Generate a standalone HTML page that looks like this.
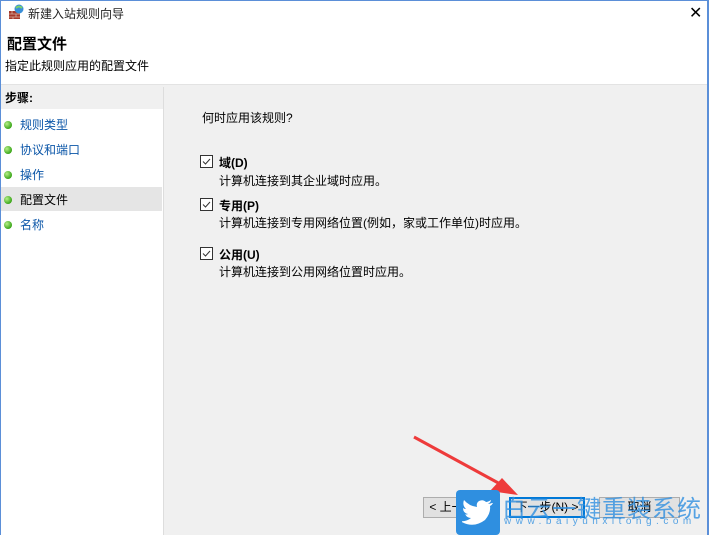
<!DOCTYPE html>
<html><head><meta charset="utf-8"><style>
body{margin:0;width:709px;height:535px;overflow:hidden;font-family:"Liberation Sans","Noto Sans CJK SC",sans-serif;font-size:12px;color:#000;position:relative;background:#f0f0f0}
.a{position:absolute;white-space:nowrap}
.cb{position:absolute;width:11px;height:11px;border:1px solid #333;background:#fff}
.cb svg{position:absolute;left:0;top:0}
.dot{position:absolute;left:4px;width:8px;height:8px;border-radius:50%;background:radial-gradient(circle at 35% 35%,#b8f08a,#3aa619 70%)}
.btn{position:absolute;top:497px;height:19px;border:1px solid #adadad;background:#e1e1e1;text-align:center;line-height:19px}
</style></head><body>
<div class="a" style="left:0;top:0;width:709px;height:84px;background:#fff;border-bottom:1px solid #e3e3e3"></div>
<div class="a" style="left:0;top:0;width:1px;height:535px;background:#5b8fd8"></div>
<div class="a" style="left:707px;top:0;width:2px;height:535px;background:#5b8fd8"></div>
<div class="a" style="left:0;top:0;width:709px;height:1px;background:#5b8fd8"></div>
<div class="a" style="left:8px;top:4px;width:16px;height:16px"><svg width="16" height="16"><rect x="1" y="7" width="11" height="8" fill="#a5382a"/><path d="M1 10h11M1 13h11M4 7v3M8 10v3M5 13v2" stroke="#d8b0a0" stroke-width=".8"/><circle cx="11" cy="5" r="4.5" fill="#3a8fd8"/><path d="M8 4q3-3 6 0" stroke="#7bd36a" stroke-width="2" fill="none"/></svg></div>
<div class="a" style="left:28px;top:5px;font-size:12px;color:#222">新建入站规则向导</div>
<div class="a" style="left:689px;top:3px;font-size:16px">✕</div>
<div class="a" style="left:7px;top:33px;font-size:15px;font-weight:bold">配置文件</div>
<div class="a" style="left:5px;top:57px">指定此规则应用的配置文件</div>
<div class="a" style="left:1px;top:87px;width:162px;height:448px;background:#fff;border-right:1px solid #ddd"></div>
<div class="a" style="left:1px;top:87px;width:162px;height:22px;background:#f0f0f0"></div>
<div class="a" style="left:5px;top:89px;font-weight:bold">步骤:</div>
<div class="a" style="left:1px;top:187px;width:161px;height:24px;background:#e5e5e5"></div>
<div class="dot" style="top:121px"></div><div class="a" style="left:20px;top:116px;color:#0b56a8">规则类型</div>
<div class="dot" style="top:146px"></div><div class="a" style="left:20px;top:141px;color:#0b56a8">协议和端口</div>
<div class="dot" style="top:171px"></div><div class="a" style="left:20px;top:166px;color:#0b56a8">操作</div>
<div class="dot" style="top:196px"></div><div class="a" style="left:20px;top:191px">配置文件</div>
<div class="dot" style="top:221px"></div><div class="a" style="left:20px;top:216px;color:#0b56a8">名称</div>
<div class="a" style="left:202px;top:109px">何时应用该规则?</div>
<div class="cb" style="left:200px;top:155px"><svg width="11" height="11"><path d="M2 5.5l2.5 2.5 4.5-5" stroke="#333" fill="none"/></svg></div>
<div class="a" style="left:219px;top:154px;font-weight:bold">域(D)</div>
<div class="a" style="left:219px;top:172px">计算机连接到其企业域时应用。</div>
<div class="cb" style="left:200px;top:198px"><svg width="11" height="11"><path d="M2 5.5l2.5 2.5 4.5-5" stroke="#333" fill="none"/></svg></div>
<div class="a" style="left:219px;top:197px;font-weight:bold">专用(P)</div>
<div class="a" style="left:219px;top:214px">计算机连接到专用网络位置(例如，家或工作单位)时应用。</div>
<div class="cb" style="left:200px;top:247px"><svg width="11" height="11"><path d="M2 5.5l2.5 2.5 4.5-5" stroke="#333" fill="none"/></svg></div>
<div class="a" style="left:219px;top:246px;font-weight:bold">公用(U)</div>
<div class="a" style="left:219px;top:263px">计算机连接到公用网络位置时应用。</div>
<div class="btn" style="left:423px;width:73px">&lt; 上一步(B)</div>
<div class="btn" style="left:509px;width:74px;border:1px solid #0078d7;box-shadow:inset 0 0 0 1px #0078d7">下一步(N) &gt;</div>
<div class="btn" style="left:599px;width:79px">取消</div>
<svg class="a" style="left:410px;top:430px" width="120" height="75"><path d="M4 7L92 55" stroke="#ee3b3b" stroke-width="3"/><path d="M108 65L80 61L92 48Z" fill="#ee3b3b"/></svg>
<div class="a" style="left:456px;top:490px;width:44px;height:45px;background:#2f8fe0;border-radius:4px"></div>
<svg class="a" style="left:462px;top:498px" width="32" height="28"><path d="M30 5q-3 1-4 1 3-2 3-4-3 2-5 2-3-3-7-1-3 2-2 6-8-1-13-7-2 5 2 9-2 0-3-1 0 5 5 6-2 1-3 0 2 4 6 4-5 4-11 3 13 8 25-1 6-7 5-14 2-1 3-3z" fill="#fff"/></svg>
<div class="a" style="left:502px;top:489px;font-size:24px;color:#2f8fe0;opacity:.8;letter-spacing:1px">白云一键重装系统</div>
<div class="a" style="left:504px;top:516px;font-size:10px;color:#2f8fe0;opacity:.8;letter-spacing:4.5px">www.baiyunxitong.com</div>
</body></html>
